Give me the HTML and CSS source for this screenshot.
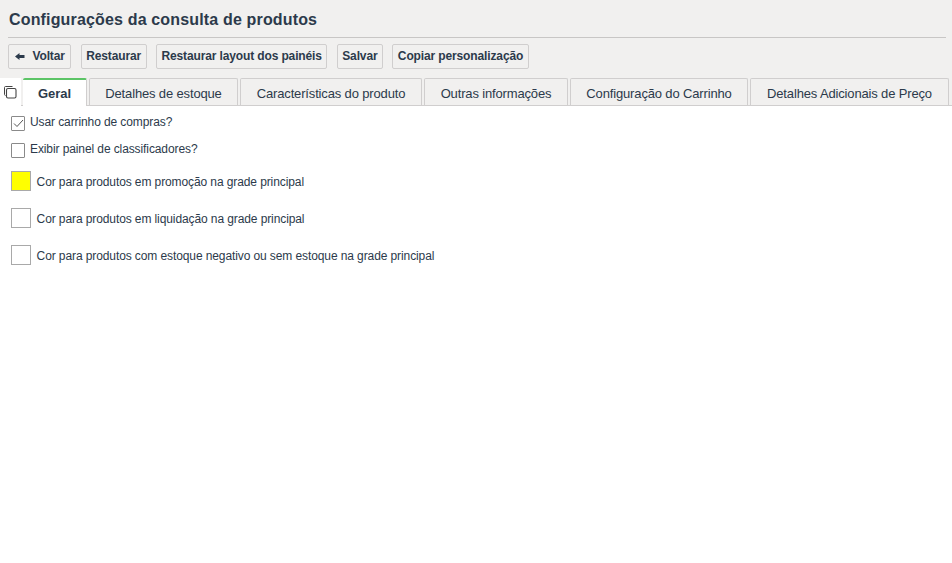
FILE: index.html
```html
<!DOCTYPE html>
<html lang="pt-BR">
<head>
<meta charset="utf-8">
<title>Configurações da consulta de produtos</title>
<link rel="stylesheet" href="styles.css">
</head>
<body>
<header class="top">
  <h1 class="title">Configurações da consulta de produtos</h1>
  <div class="toolbar">
    <button class="btn"><svg class="back" width="10" height="7" viewBox="0 0 10 7"><path d="M0 3.5 L4.5 0 V2 H9.5 V5 H4.5 V7 Z" fill="#2c3a4b"/></svg>Voltar</button>
    <button class="btn">Restaurar</button>
    <button class="btn">Restaurar layout dos painéis</button>
    <button class="btn">Salvar</button>
    <button class="btn">Copiar personalização</button>
  </div>
  <nav class="tabs">
    <span class="copy"><svg width="16" height="16" viewBox="0 0 16 16" fill="none" stroke="#444"><path d="M3.5 11.5 C3 11.5 2.5 11 2.5 10.5 V3.5 C2.5 2.8 3 2.5 3.5 2.5 H10.5"/><rect x="4.5" y="4.5" width="9.5" height="9.5" rx="1.5" stroke-width="1.1"/></svg></span>
    <a class="tab active">Geral</a>
    <a class="tab w1">Detalhes de estoque</a>
    <a class="tab w2">Características do produto</a>
    <a class="tab w3">Outras informações</a>
    <a class="tab w4">Configuração do Carrinho</a>
    <a class="tab w5">Detalhes Adicionais de Preço</a>
  </nav>
</header>
<main class="content">
  <label class="check-row"><span class="check"><svg width="11" height="9" viewBox="0 0 11 9" fill="none" stroke="#555" stroke-width="1"><path d="M1 4.5 L4 7.5 L10 1"/></svg></span><span class="label">Usar carrinho de compras?</span></label>
  <label class="check-row second"><span class="check"></span><span class="label">Exibir painel de classificadores?</span></label>
  <div class="color-row"><span class="swatch yellow"></span><span class="label">Cor para produtos em promoção na grade principal</span></div>
  <div class="color-row"><span class="swatch"></span><span class="label">Cor para produtos em liquidação na grade principal</span></div>
  <div class="color-row"><span class="swatch"></span><span class="label">Cor para produtos com estoque negativo ou sem estoque na grade principal</span></div>
</main>
</body>
</html>
```
FILE: styles.css
```css
* { box-sizing: border-box; }
html, body { margin: 0; padding: 0; background: #fff; }
body { font-family: "Liberation Sans", Arial, sans-serif; color: #2c3a4b; overflow: hidden; }
.top { background: #f1f0ef; height: 106px; border-bottom: 1px solid #d0cece; position: relative; }
.title { margin: 0 6px 0 8px; padding: 11px 0 9px 1px; height: 38px; font-size: 16px; line-height: 18px; font-weight: bold; letter-spacing: 0.16px; color: #2c3a4b; border-bottom: 1px solid #c8c6c5; }
.toolbar { display: flex; gap: 9.2px; padding: 6px 0 0 8px; height: 40px; }
.btn { height: 25px; padding: 0 4.6px; background: #f1f0ef; border: 1px solid #d0cece; border-radius: 2px; font: bold 12px/23px "Liberation Sans", Arial, sans-serif; letter-spacing: -0.13px; color: #2c3a4b; white-space: nowrap; display: flex; align-items: center; }
.btn:first-child { padding-right: 5.6px; }
.back { margin: 0 7.5px 0 1.4px; }
.tabs { display: flex; height: 28px; align-items: flex-start; gap: 2px; }
.copy { width: 21px; height: 28px; background: #fff; padding: 6px 0 0 2px; }
.tab { height: 27px; background: #f1f0ef; border: 1px solid #d0cece; border-bottom: 0; border-radius: 2px 2px 0 0; font-size: 13px; letter-spacing: -0.15px; line-height: 29px; text-align: center; color: #2c3a4b; white-space: nowrap; }
.tab.active { width: 64px; height: 28px; background: #fff; border: 0; border-top: 2px solid #5cc466; border-right: 1px solid #d0cece; font-weight: bold; letter-spacing: 0; line-height: 27px; position: relative; z-index: 1; }
.w1 { width: 149px; }
.w2 { width: 182px; }
.w3 { width: 144px; }
.w4 { width: 178px; }
.w5 { width: 199px; }
.content { padding: 8px 0 0 11px; font-size: 12px; color: #2c3a4b; }
.label { letter-spacing: -0.1px; }
.check-row { display: flex; align-items: center; height: 16px; line-height: 16px; }
.check-row.second { margin-top: 11px; }
.check { width: 14px; height: 15px; border: 1px solid #8a8a8a; border-radius: 1px; margin-right: 5px; background: #fff; display: flex; align-items: center; justify-content: center; position: relative; top: 1px; }
.color-row { display: flex; align-items: center; height: 20px; margin-top: 17px; }
.color-row .label { padding-top: 2px; }
.check-row.second + .color-row { margin-top: 14px; }
.swatch { width: 20px; height: 20px; border: 1px solid #a9a9a9; margin-right: 5.6px; background: #fff; }
.swatch.yellow { background: #ffff00; }
```
